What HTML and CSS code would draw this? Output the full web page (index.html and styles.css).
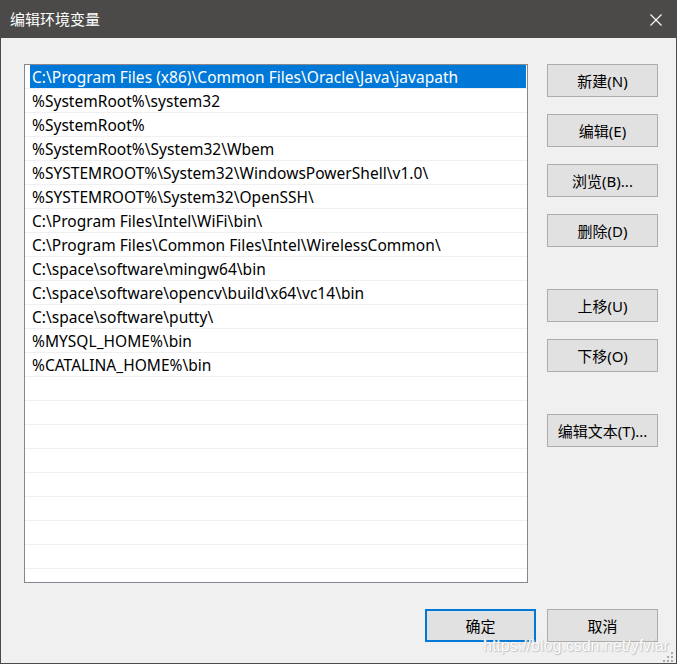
FILE: index.html
```html
<!DOCTYPE html>
<html lang="zh-CN">
<head>
<meta charset="utf-8">
<title>编辑环境变量</title>
<link rel="stylesheet" href="styles.css">
</head>
<body>
<div class="window">
  <div class="titlebar">
    <span class="title">编辑环境变量</span>
    <svg class="close" width="12" height="12" viewBox="0 0 12 12" aria-label="关闭"><path d="M0.5 0.5 L11.5 11.5 M11.5 0.5 L0.5 11.5" stroke="#ffffff" stroke-width="1.1" fill="none"/></svg>
  </div>
  <div class="content">
    <div class="main">
      <div class="list">
        <div class="row"><div class="cell selected">C:\Program Files (x86)\Common Files\Oracle\Java\javapath</div></div>
        <div class="row"><div class="cell">%SystemRoot%\system32</div></div>
        <div class="row"><div class="cell">%SystemRoot%</div></div>
        <div class="row"><div class="cell">%SystemRoot%\System32\Wbem</div></div>
        <div class="row"><div class="cell">%SYSTEMROOT%\System32\WindowsPowerShell\v1.0\</div></div>
        <div class="row"><div class="cell">%SYSTEMROOT%\System32\OpenSSH\</div></div>
        <div class="row"><div class="cell">C:\Program Files\Intel\WiFi\bin\</div></div>
        <div class="row"><div class="cell">C:\Program Files\Common Files\Intel\WirelessCommon\</div></div>
        <div class="row"><div class="cell">C:\space\software\mingw64\bin</div></div>
        <div class="row"><div class="cell">C:\space\software\opencv\build\x64\vc14\bin</div></div>
        <div class="row"><div class="cell">C:\space\software\putty\</div></div>
        <div class="row"><div class="cell">%MYSQL_HOME%\bin</div></div>
        <div class="row"><div class="cell">%CATALINA_HOME%\bin</div></div>
        <div class="row"><div class="cell"></div></div>
        <div class="row"><div class="cell"></div></div>
        <div class="row"><div class="cell"></div></div>
        <div class="row"><div class="cell"></div></div>
        <div class="row"><div class="cell"></div></div>
        <div class="row"><div class="cell"></div></div>
        <div class="row"><div class="cell"></div></div>
        <div class="row"><div class="cell"></div></div>
      </div>
      <div class="side">
        <button class="btn">新建(N)</button>
        <button class="btn">编辑(E)</button>
        <button class="btn">浏览(B)...</button>
        <button class="btn">删除(D)</button>
        <button class="btn group">上移(U)</button>
        <button class="btn">下移(O)</button>
        <button class="btn group">编辑文本(T)...</button>
      </div>
    </div>
    <div class="footer">
      <button class="btn primary">确定</button>
      <button class="btn">取消</button>
    </div>
  </div>
  <div class="watermark">https://blog.csdn.net/yfviar</div>
  <svg class="grip" width="10" height="10" viewBox="0 0 10 10">
    <rect x="8" y="0" width="2" height="2" fill="#a9a9a9"/>
    <rect x="4" y="4" width="2" height="2" fill="#a9a9a9"/>
    <rect x="8" y="4" width="2" height="2" fill="#a9a9a9"/>
    <rect x="0" y="8" width="2" height="2" fill="#a9a9a9"/>
    <rect x="4" y="8" width="2" height="2" fill="#a9a9a9"/>
    <rect x="8" y="8" width="2" height="2" fill="#a9a9a9"/>
  </svg>
</div>
</body>
</html>
```
FILE: styles.css
```css
* { box-sizing: border-box; }

html, body {
  margin: 0;
  padding: 0;
  background: #f0f0f0;
}

body {
  font-family: "Noto Sans", "Noto Sans CJK SC", sans-serif;
  font-size: 15px;
  color: #000;
}

.window {
  position: relative;
  width: 677px;
  height: 664px;
  border: 1px solid #4c4a48;
  background: #f0f0f0;
  display: flex;
  flex-direction: column;
}

.titlebar {
  height: 37px;
  flex: none;
  background: #4c4a48;
  display: flex;
  align-items: center;
  justify-content: space-between;
  padding: 0 14px 0 9px;
}

.title {
  color: #fff;
  font-family: "Noto Sans CJK SC", sans-serif;
  font-size: 15px;
  line-height: 20px;
  padding-bottom: 1px;
}

.close {
  display: block;
}

.content {
  flex: 1;
  display: flex;
  flex-direction: column;
  padding: 26px 18px 21px 23px;
}

.main {
  display: flex;
  gap: 19px;
}

.list {
  width: 504px;
  height: 519px;
  border: 1px solid #828790;
  background: #fff;
  overflow: hidden;
}

.row {
  height: 24px;
  border-bottom: 1px solid #f0f0f0;
  padding: 0 1px 0 5px;
}

.cell {
  height: 23px;
  line-height: 23px;
  padding: 1px 0 0 2px;
  font-size: 15.5px;
  letter-spacing: 0.03px;
  white-space: nowrap;
  overflow: hidden;
}

.cell.selected {
  background: #0078d7;
  color: #fff;
}

.side {
  display: flex;
  flex-direction: column;
  gap: 17px;
}

.btn {
  width: 111px;
  height: 33px;
  border: 1px solid #adadad;
  background: #e1e1e1;
  font-family: "Noto Sans", "Noto Sans CJK SC", sans-serif;
  font-size: 15px;
  color: #000;
  padding: 0;
  line-height: 20px;
  text-align: center;
}

.btn.group {
  margin-top: 25px;
}

.btn.primary {
  border: 2px solid #0078d7;
}

.footer {
  margin-top: 26px;
  display: flex;
  justify-content: flex-end;
  gap: 11px;
}

.watermark {
  position: absolute;
  left: 482px;
  top: 636px;
  font-family: "Liberation Sans", sans-serif;
  font-size: 16px;
  line-height: 18px;
  color: #ffffff;
  text-shadow: 0 0 1px #b4b4b4, 1px 1px 1px #c4c4c4;
}

.grip {
  position: absolute;
  right: 3px;
  bottom: 1px;
}
```
